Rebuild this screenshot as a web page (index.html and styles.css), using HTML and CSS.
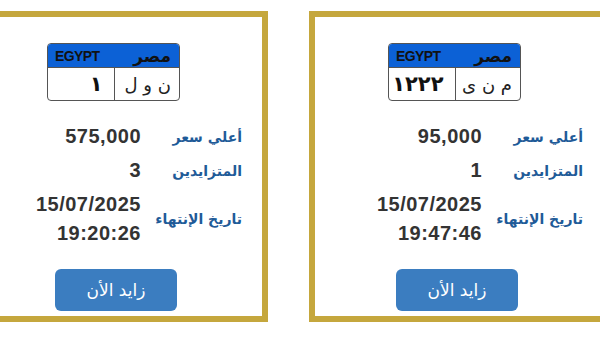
FILE: index.html
```html
<!DOCTYPE html>
<html lang="ar">
<head>
  <meta charset="UTF-8">
  <title>مزادات اللوحات</title>
  <link rel="stylesheet" href="styles.css">
</head>
<body>

  <div class="track">

    <div class="card">
      <div class="plate">
        <div class="plate-head">
          <span class="plate-ar">مصر</span>
          <span class="plate-en">EGYPT</span>
        </div>
        <div class="plate-body">
          <span class="plate-letters">ن و ل</span>
          <span class="plate-num">١</span>
        </div>
      </div>
      <div class="info">
        <div class="label">أعلي سعر</div>
        <div class="value">575,000</div>
        <div class="label">المتزايدين</div>
        <div class="value">3</div>
        <div class="label">تاريخ الإنتهاء</div>
        <div class="value">15/07/2025<br>19:20:26</div>
      </div>
      <button class="bid">زايد الأن</button>
    </div>

    <div class="card">
      <div class="plate">
        <div class="plate-head">
          <span class="plate-ar">مصر</span>
          <span class="plate-en">EGYPT</span>
        </div>
        <div class="plate-body">
          <span class="plate-letters">م ن ى</span>
          <span class="plate-num">١٢٢٢</span>
        </div>
      </div>
      <div class="info">
        <div class="label">أعلي سعر</div>
        <div class="value">95,000</div>
        <div class="label">المتزايدين</div>
        <div class="value">1</div>
        <div class="label">تاريخ الإنتهاء</div>
        <div class="value">15/07/2025<br>19:47:46</div>
      </div>
      <button class="bid">زايد الأن</button>
    </div>

  </div>

</body>
</html>
```

FILE: styles.css
```css
body { margin: 0; background: #fff; font-family: "Liberation Sans", "DejaVu Sans", sans-serif; }
.track { display: flex; gap: 41px; margin: 11px 0 0 -32px; }
.card { flex: 0 0 300px; box-sizing: border-box; border: 6px solid #c5a73d; background: #fff; direction: rtl; padding: 26px 0 5px; }

.plate { width: 133px; height: 58px; box-sizing: border-box; margin-right: 82px; border: 1.5px solid #555; border-radius: 4px; overflow: hidden; }
.plate-head { height: 23px; background: #0c61d6; display: flex; justify-content: space-between; align-items: center; padding: 0 8px 0 7px; }
.plate-ar { font-family: "DejaVu Sans", sans-serif; font-weight: bold; font-size: 17px; line-height: 20px; color: #111; }
.plate-en { font-family: "Liberation Sans", sans-serif; font-weight: bold; font-size: 14px; color: #111; letter-spacing: -0.6px; }
.plate-body { display: flex; height: 32px; border-top: 1px solid #555; }
.plate-letters, .plate-num { flex: 0 0 50%; box-sizing: border-box; display: flex; align-items: center; }
.plate-letters { padding-right: 8px; font-family: "DejaVu Sans", sans-serif; font-size: 18px; color: #222; border-left: 1px solid #555; letter-spacing: -2px; }
.plate-num { justify-content: flex-end; padding-right: 11px; font-family: "DejaVu Sans", sans-serif; font-weight: bold; font-size: 21px; color: #111; direction: ltr; }

.info { display: grid; grid-template-columns: 90px auto; column-gap: 11px; row-gap: 5px; align-items: center; margin: 21px 20px 0 0; }
.label { font-family: "DejaVu Sans", sans-serif; font-weight: bold; font-size: 14px; color: #1f5b98; }
.value { direction: ltr; text-align: right; font-weight: bold; font-size: 20px; line-height: 29px; color: #333; letter-spacing: 0.5px; }

.bid { display: block; width: 122px; height: 42px; margin: 21px 85px 0 0; border: 0; border-radius: 6px; background: #3b7dc0; color: #fff; font-family: "DejaVu Sans", sans-serif; font-size: 17px; }
```
